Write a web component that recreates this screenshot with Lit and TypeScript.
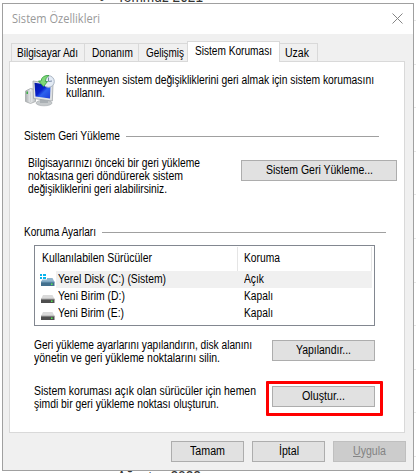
import { LitElement, html, css, svg } from "lit";
import { customElement, property } from "lit/decorators.js";

/** One line of text, condensed to the advance width of the dialog font. */
@customElement("fit-line")
class FitLine extends LitElement {
  @property({ type: Number }) w = 0;
  @property({ type: Number }) accel = 0;
  @property() text = "";
  static styles = css`
    :host { display: block; height: 13px; line-height: 13px; white-space: pre; flex: none; }
    .t { display: inline-block; transform-origin: 0 50%; }
    .u { text-decoration: underline; text-underline-offset: 1px; }
  `;
  render() {
    return html`<span class="t">${this.accel
      ? html`<span class="u">${this.text.slice(0, this.accel)}</span>${this.text.slice(this.accel)}`
      : this.text}</span>`;
  }
  updated() {
    const t = this.renderRoot.querySelector(".t") as HTMLElement;
    t.style.transform = "none";
    const natural = t.getBoundingClientRect().width;
    this.style.width = `${this.w}px`;
    if (natural) t.style.transform = `scaleX(${this.w / natural})`;
  }
}

const line = (text: string, w: number, accel = 0) =>
  html`<fit-line .text=${text} .w=${w} .accel=${accel}></fit-line>`;

const restoreIcon = svg`<svg class="restore" viewBox="0 0 32 33" width="32" height="33">
  <defs>
    <linearGradient id="scr" x1="0" y1="0" x2="1" y2="1"><stop offset="0" stop-color="#0518a0"/><stop offset=".45" stop-color="#0820cc"/><stop offset=".6" stop-color="#2c62ee"/><stop offset="1" stop-color="#1a3ad8"/></linearGradient>
    <linearGradient id="cas" x1="0" y1="0" x2="1" y2="0"><stop offset="0" stop-color="#a9adb0"/><stop offset=".5" stop-color="#e9ebec"/><stop offset="1" stop-color="#b9bdc0"/></linearGradient>
  </defs>
  <path d="M1.500 17l5-2.500 5 1v12l-5 2-5-2z" fill="url(#cas)" stroke="#a4a8aa" stroke-width=".8"/>
  <path d="M6.500 17.500v11" stroke="#cfd2d4"/>
  <rect x="2.500" y="17.500" width="1.500" height="2.500" fill="#3fae48"/>
  <ellipse cx="20" cy="29" rx="8" ry="2.800" fill="#c6cacc" stroke="#a1a6a9" stroke-width=".6"/>
  <path d="M16 25h8v4h-8z" fill="#aab0b4"/>
  <path d="M9 7l20 3-.7 17-18.800-2.500z" fill="#dfe2e4" stroke="#9fa4a8" stroke-width=".8"/>
  <path d="M10.500 8.800l16 2.500-.5 13.200-14.500-2z" fill="url(#scr)"/>
  <circle cx="24.500" cy="7.500" r="5.800" fill="#e3ebf5" stroke="#a9b4c2"/>
  <path d="M24.500 3.500v4l3.500-.5" fill="none" stroke="#7889a5"/>
  <path d="M14.500 7L19.500 12.500l4-5h-2.200Q21 4 25 1.500Q18 1 17 7z" fill="#7fd877" stroke="#2f9b3b" stroke-width=".8"/>
</svg>`;

const closeIcon = svg`<svg class="close" width="11" height="11" viewBox="0 0 11 11"><path d="M.5 .5l10 10M10.500 .5l-10 10" stroke="#858585" fill="none"/></svg>`;

const driveIcon = (system: boolean) => svg`<svg width="15" height="17" viewBox="0 0 15 17">
  <path d="M3 7h9.500l2 4H1z" fill="${system ? "#90b4cc" : "#dadada"}"/>
  <path d="M1 11h13.500v4H1z" fill="${system ? "#426f8d" : "#4e4e4e"}"/>
  <path d="M1 10.500h13.500v1H1z" fill="${system ? "#6b98b4" : "#aaa"}"/>
  <rect x="11" y="12.500" width="1.500" height="1.500" fill="#50ee50"/>
  ${system ? svg`<path d="M0 2h7v6.500H0z" fill="#fff"/><path d="M0 3h2v2H0zM3 3h3v2H3zM0 6h2v2H0zM3 6h3v2H3z" fill="#08b4ec"/>` : ""}
</svg>`;

const drives = [
  { name: "Yerel Disk (C:) (Sistem)", w: 108, state: "Açık", sw: 20, system: true },
  { name: "Yeni Birim (D:)", w: 67, state: "Kapalı", sw: 29, system: false },
  { name: "Yeni Birim (E:)", w: 66, state: "Kapalı", sw: 29, system: false },
];

@customElement("app-root")
class AppRoot extends LitElement {
  static styles = css`
    *, *::after { box-sizing: border-box; }
    :host {
      display: block; position: relative; width: 416px; height: 473px; overflow: hidden;
      background: #fff; color: #000; font: 12px "Liberation Sans", Arial, sans-serif;
      padding: 3px 2px 2px; box-sizing: border-box;
    }
    svg { display: block; flex: none; }
    .behind { position: absolute; font: 16px/13px "Liberation Sans", sans-serif; color: #333; white-space: pre; }
    .top { top: -10px; left: 99px; display: flex; gap: 12px; }
    .dot { margin-top: 2px; }
    .bottom { top: 471px; left: 117px; }
    .rules { position: absolute; left: 414px; top: 20px; width: 2px; height: 450px;
      background: repeating-linear-gradient(#e6e6e6 0 1px, #fff 1px 43.6px); }
    .dialog { position: relative; width: 412px; height: 468px; border: 1px solid #a0a0a0; background: #f0f0f0; display: flex; flex-direction: column; }
    .title { height: 30px; background: #fff; color: #999; display: flex; justify-content: space-between; padding: 8px 10px 0 9px; font: 12.5px "Open Sans", sans-serif; }
    .close { margin-top: 1px; }
    .tabs { display: flex; align-items: flex-end; height: 28px; margin-left: 8px; flex: none; z-index: 1; margin-bottom: -1px; }
    .tab { height: 19px; border: 1px solid #d9d9d9; border-left: 0; padding: 3px 0 0 7px; background: #f0f0f0; }
    .tab:first-child { border-left: 1px solid #d9d9d9; padding-left: 5px; }
    .tab.active { height: 21px; background: #fff; border-left: 1px solid #d9d9d9; border-bottom: 0; margin-left: -1px; }
    .tab:last-child { padding-left: 5px; }
    .page { width: 396px; height: 372px; margin-left: 6px; border: 1px solid #d9d9d9; background: #fff; flex: none; padding: 12px 0 0 14px; }
    .row { display: flex; align-items: flex-start; }
    .intro { height: 56px; gap: 10px; }
    .group { display: flex; height: 13px; gap: 6px; }
    .rule { height: 1px; background: #a0a0a0; margin-top: 6px; }
    .btn { height: 21px; border: 1px solid #adadad; background: #e1e1e1; display: flex; justify-content: center; padding-top: 3px; flex: none; }
    .restore-row { margin-top: 14px; height: 69px; padding-left: 4px; }
    .restore-row .btn { width: 156px; margin: 3px 0 0 42px; }
    .copy { width: 171px; }
    .list { width: 341px; height: 81px; margin: 6px 0 0 10px; border: 1px solid #828790; padding: 1px; }
    .head { display: flex; height: 24px; width: 336px; border-right: 1px solid #e5e5e5; }
    .c1 { width: 202px; padding: 5px 0 0 6px; border-right: 1px solid #e5e5e5; }
    .c2 { padding: 5px 0 0 6px; }
    .drive { display: flex; height: 17px; width: 336px; padding-left: 4px; }
    .cells { flex: 1; display: grid; grid-template-columns: 186px 1fr; padding: 2px 0 0 2px; margin-left: 1px; }
    .sel .cells { background: #f0f0f0; }
    .action { padding-left: 10px; height: 46px; }
    .action .copy { width: 238px; }
    .action .btn { width: 103px; margin-top: 1px; }
    .first { margin-top: 13px; }
    .mark { position: relative; }
    .mark::after { content: ""; position: absolute; left: -7px; top: -6px; width: 117px; height: 35px; border: 3px solid #f00; border-radius: 1px; }
    .footer { display: flex; gap: 8px; margin: 8px 0 0 168px; }
    .footer .btn { width: 73px; }
    .footer .off { background: #ccc; border-color: #bfbfbf; color: #838383; }
  `;
  render() {
    return html`
      <div class="behind top"><span class="dot">•</span>${line("Temmuz 2021", 86)}</div>
      <div class="behind bottom">${line("Ağustos 2022", 84)}</div>
      <div class="rules"></div>
      <div class="dialog">
        <div class="title">${line("Sistem Özellikleri", 88)}${closeIcon}</div>
        <div class="tabs">
          <div class="tab" style="width:74px">${line("Bilgisayar Adı", 61)}</div>
          <div class="tab" style="width:54px">${line("Donanım", 41)}</div>
          <div class="tab" style="width:49px">${line("Gelişmiş", 38)}</div>
          <div class="tab active" style="width:93px">${line("Sistem Koruması", 77)}</div>
          <div class="tab" style="width:38px">${line("Uzak", 24)}</div>
        </div>
        <div class="page">
          <div class="row intro">${restoreIcon}
            <div>${line("İstenmeyen sistem değişikliklerini geri almak için sistem korumasını", 308)}${line("kullanın.", 39)}</div>
          </div>
          <div class="group">${line("Sistem Geri Yükleme", 96)}<div class="rule" style="width:253px"></div></div>
          <div class="row restore-row">
            <div class="copy">
              ${line("Bilgisayarınızı önceki bir geri yükleme", 172)}
              ${line("noktasına geri döndürerek sistem", 155)}
              ${line("değişikliklerini geri alabilirsiniz.", 139)}
            </div>
            <div class="btn">${line("Sistem Geri Yükleme...", 107)}</div>
          </div>
          <div class="group">${line("Koruma Ayarları", 72)}<div class="rule" style="width:284px"></div></div>
          <div class="list">
            <div class="head"><div class="c1">${line("Kullanılabilen Sürücüler", 110)}</div><div class="c2">${line("Koruma", 36)}</div></div>
            ${drives.map((d) => html`<div class="drive ${d.system ? "sel" : ""}">${driveIcon(d.system)}
              <div class="cells">${line(d.name, d.w)}${line(d.state, d.sw)}</div></div>`)}
          </div>
          <div class="row action first">
            <div class="copy">${line("Geri yükleme ayarlarını yapılandırın, disk alanını", 218)}${line("yönetin ve geri yükleme noktalarını silin.", 186)}</div>
            <div class="btn">${line("Yapılandır...", 55)}</div>
          </div>
          <div class="row action">
            <div class="copy">${line("Sistem koruması açık olan sürücüler için hemen", 222)}${line("şimdi bir geri yükleme noktası oluşturun.", 185)}</div>
            <div class="btn mark">${line("Oluştur...", 43)}</div>
          </div>
        </div>
        <div class="footer">
          <div class="btn">${line("Tamam", 35)}</div>
          <div class="btn">${line("İptal", 20)}</div>
          <div class="btn off">${line("Uygula", 33, 1)}</div>
        </div>
      </div>`;
  }
}
